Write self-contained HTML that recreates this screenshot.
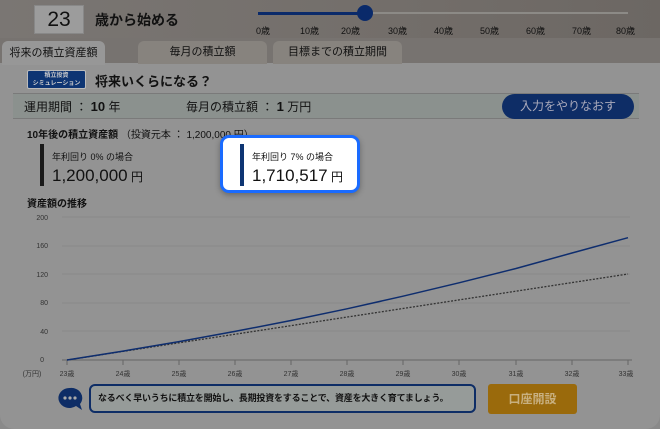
<!DOCTYPE html>
<html><head><meta charset="utf-8"><style>
*{margin:0;padding:0;box-sizing:border-box}
body{width:660px;height:429px;overflow:hidden;background:#8a8a8a;font-family:"Liberation Sans","Noto Sans CJK JP",sans-serif;color:#111;position:relative}
.top{position:absolute;left:0;top:0;width:660px;height:42px;background:linear-gradient(90deg,#7a7673,#736e6a 60%,#6c6763)}
.main{position:absolute;left:0;top:63px;width:660px;height:366px;background:#939393;border-radius:0 0 14px 14px}
.abs{position:absolute;white-space:nowrap}
</style></head><body>
<div class="top"></div>
<div class="abs" style="left:0;top:38px;width:660px;height:26px;background:#777370"></div>
<div class="abs" style="left:34px;top:5px;width:50px;height:29px;background:#9c9c9c;border:1px solid #888;font-size:21px;text-align:center;line-height:28px">23</div>
<div class="abs" style="left:95px;top:10px;font-size:14px;font-weight:bold">歳から始める</div>
<div class="abs" style="left:258px;top:12px;width:108px;height:3px;background:#0a2a6a"></div>
<div class="abs" style="left:366px;top:12px;width:262px;height:2px;background:#8c8a86"></div>
<div class="abs" style="left:357px;top:5px;width:16px;height:16px;border-radius:50%;background:#0a2a6a"></div>
<div class="abs" style="left:0;top:24px;width:660px;font-size:9px">
<span class="abs" style="left:256px">0歳</span><span class="abs" style="left:300px">10歳</span><span class="abs" style="left:341px">20歳</span><span class="abs" style="left:388px">30歳</span><span class="abs" style="left:434px">40歳</span><span class="abs" style="left:480px">50歳</span><span class="abs" style="left:526px">60歳</span><span class="abs" style="left:572px">70歳</span><span class="abs" style="left:616px">80歳</span></div>
<div class="main"></div>
<div class="abs" style="left:2px;top:41px;width:103px;height:24px;background:#979797;border-radius:6px 6px 0 0;font-size:11px;text-align:center;line-height:24px">将来の積立資産額</div>
<div class="abs" style="left:138px;top:41px;width:129px;height:23px;background:#87837e;border-radius:6px 6px 0 0;font-size:11px;text-align:center;line-height:23px">毎月の積立額</div>
<div class="abs" style="left:273px;top:41px;width:129px;height:23px;background:#87837e;border-radius:6px 6px 0 0;font-size:11px;text-align:center;line-height:23px">目標までの積立期間</div>
<div class="abs" style="left:27px;top:70px;width:59px;height:19px;background:#0e3573;border:1px solid #bbb;border-radius:2px;color:#ccc;font-size:6px;text-align:center;line-height:8px;padding-top:1px;font-weight:bold">積立投資<br>シミュレーション</div>
<div class="abs" style="left:95px;top:71px;font-size:13px;font-weight:bold">将来いくらになる？</div>
<div class="abs" style="left:13px;top:93px;width:626px;height:26px;background:#8b918e;border-top:1px solid #7a7a7a;border-bottom:1px solid #7a7a7a"></div>
<div class="abs" style="left:24px;top:98px;font-size:12px">運用期間 ： <b style="font-size:13px">10</b> 年</div>
<div class="abs" style="left:186px;top:98px;font-size:12px">毎月の積立額 ： <b style="font-size:13px">1</b> 万円</div>
<div class="abs" style="left:502px;top:94px;width:132px;height:25px;background:#0e2d66;border-radius:13px;color:#aab;font-size:12px;text-align:center;line-height:25px">入力をやりなおす</div>
<div class="abs" style="left:27px;top:126px;font-size:10px;font-weight:bold">10年後の積立資産額 <span style="font-weight:normal">（投資元本 ： 1,200,000 円）</span></div>
<div class="abs" style="left:40px;top:144px;width:4px;height:42px;background:#1a1a1a"></div>
<div class="abs" style="left:52px;top:150px;font-size:9px">年利回り 0% の場合</div>
<div class="abs" style="left:52px;top:166px;font-size:17px">1,200,000<span style="font-size:12px"> 円</span></div>
<div class="abs" style="left:220px;top:135px;width:140px;height:58px;background:#fff;border:3px solid #1a6bff;border-radius:9px;box-shadow:0 2px 6px rgba(0,0,0,.3)"></div>
<div class="abs" style="left:240px;top:144px;width:4px;height:42px;background:#0e3573"></div>
<div class="abs" style="left:252px;top:150px;font-size:9px">年利回り 7% の場合</div>
<div class="abs" style="left:252px;top:166px;font-size:17px">1,710,517<span style="font-size:12px"> 円</span></div>
<div class="abs" style="left:27px;top:195px;font-size:10px;font-weight:bold">資産額の推移</div>
<svg class="abs" style="left:0;top:205px" width="660" height="175" viewBox="0 205 660 175">
<g stroke="#888" stroke-width="1">
<line x1="62" y1="217" x2="630" y2="217"/><line x1="62" y1="246" x2="630" y2="246"/><line x1="62" y1="274" x2="630" y2="274"/><line x1="62" y1="303" x2="630" y2="303"/><line x1="62" y1="331" x2="630" y2="331"/></g>
<line x1="62" y1="360" x2="632" y2="360" stroke="#666"/>
<g stroke="#666">
<line x1="67" y1="360" x2="67" y2="365"/><line x1="123" y1="360" x2="123" y2="365"/><line x1="179" y1="360" x2="179" y2="365"/><line x1="235" y1="360" x2="235" y2="365"/><line x1="291" y1="360" x2="291" y2="365"/><line x1="347" y1="360" x2="347" y2="365"/><line x1="403" y1="360" x2="403" y2="365"/><line x1="459" y1="360" x2="459" y2="365"/><line x1="516" y1="360" x2="516" y2="365"/><line x1="572" y1="360" x2="572" y2="365"/><line x1="628" y1="360" x2="628" y2="365"/></g>
<g font-size="7" fill="#333" text-anchor="end" font-family="Liberation Sans">
<text x="48" y="220">200</text><text x="48" y="248">160</text><text x="48" y="277">120</text><text x="48" y="305">80</text><text x="48" y="334">40</text><text x="44" y="362">0</text></g>
<polyline fill="none" stroke="#333" stroke-width="1.3" stroke-dasharray="2,1.5" points="67,360 628,274"/>
<polyline fill="none" stroke="#0e2d6e" stroke-width="1.5" points="67,360 123,351.1 179,341.6 235,331.4 291,320.5 347,308.8 403,296.2 459,282.8 516,268.5 572,253 628,237.7"/>
<g font-size="7" fill="#333" font-family="Liberation Sans,Noto Sans CJK JP" text-anchor="middle">
<text x="32" y="376">(万円)</text><text x="67" y="376">23歳</text><text x="123" y="376">24歳</text><text x="179" y="376">25歳</text><text x="235" y="376">26歳</text><text x="291" y="376">27歳</text><text x="347" y="376">28歳</text><text x="403" y="376">29歳</text><text x="459" y="376">30歳</text><text x="516" y="376">31歳</text><text x="572" y="376">32歳</text><text x="626" y="376">33歳</text></g>
</svg>
<svg class="abs" style="left:57px;top:386px" width="28" height="28" viewBox="0 0 28 28"><path d="M13 2a11 10 0 1 0 6 18l6 4-2-6a11 10 0 0 0-10-16z" fill="#0e2d66"/><circle cx="8" cy="12" r="1.6" fill="#aaa"/><circle cx="13" cy="12" r="1.6" fill="#aaa"/><circle cx="18" cy="12" r="1.6" fill="#aaa"/></svg>
<div class="abs" style="left:89px;top:384px;width:387px;height:29px;border:2px solid #0e2d66;border-radius:6px;background:#969b99;font-size:9px;letter-spacing:-0.2px;line-height:25px;padding-left:7px;font-weight:bold;overflow:hidden">なるべく早いうちに積立を開始し、長期投資をすることで、資産を大きく育てましょう。</div>
<div class="abs" style="left:488px;top:384px;width:89px;height:30px;background:#9a6a0c;border-radius:3px;color:#c8b080;font-size:12px;text-align:center;line-height:30px;font-weight:bold">口座開設</div>
</body></html>
